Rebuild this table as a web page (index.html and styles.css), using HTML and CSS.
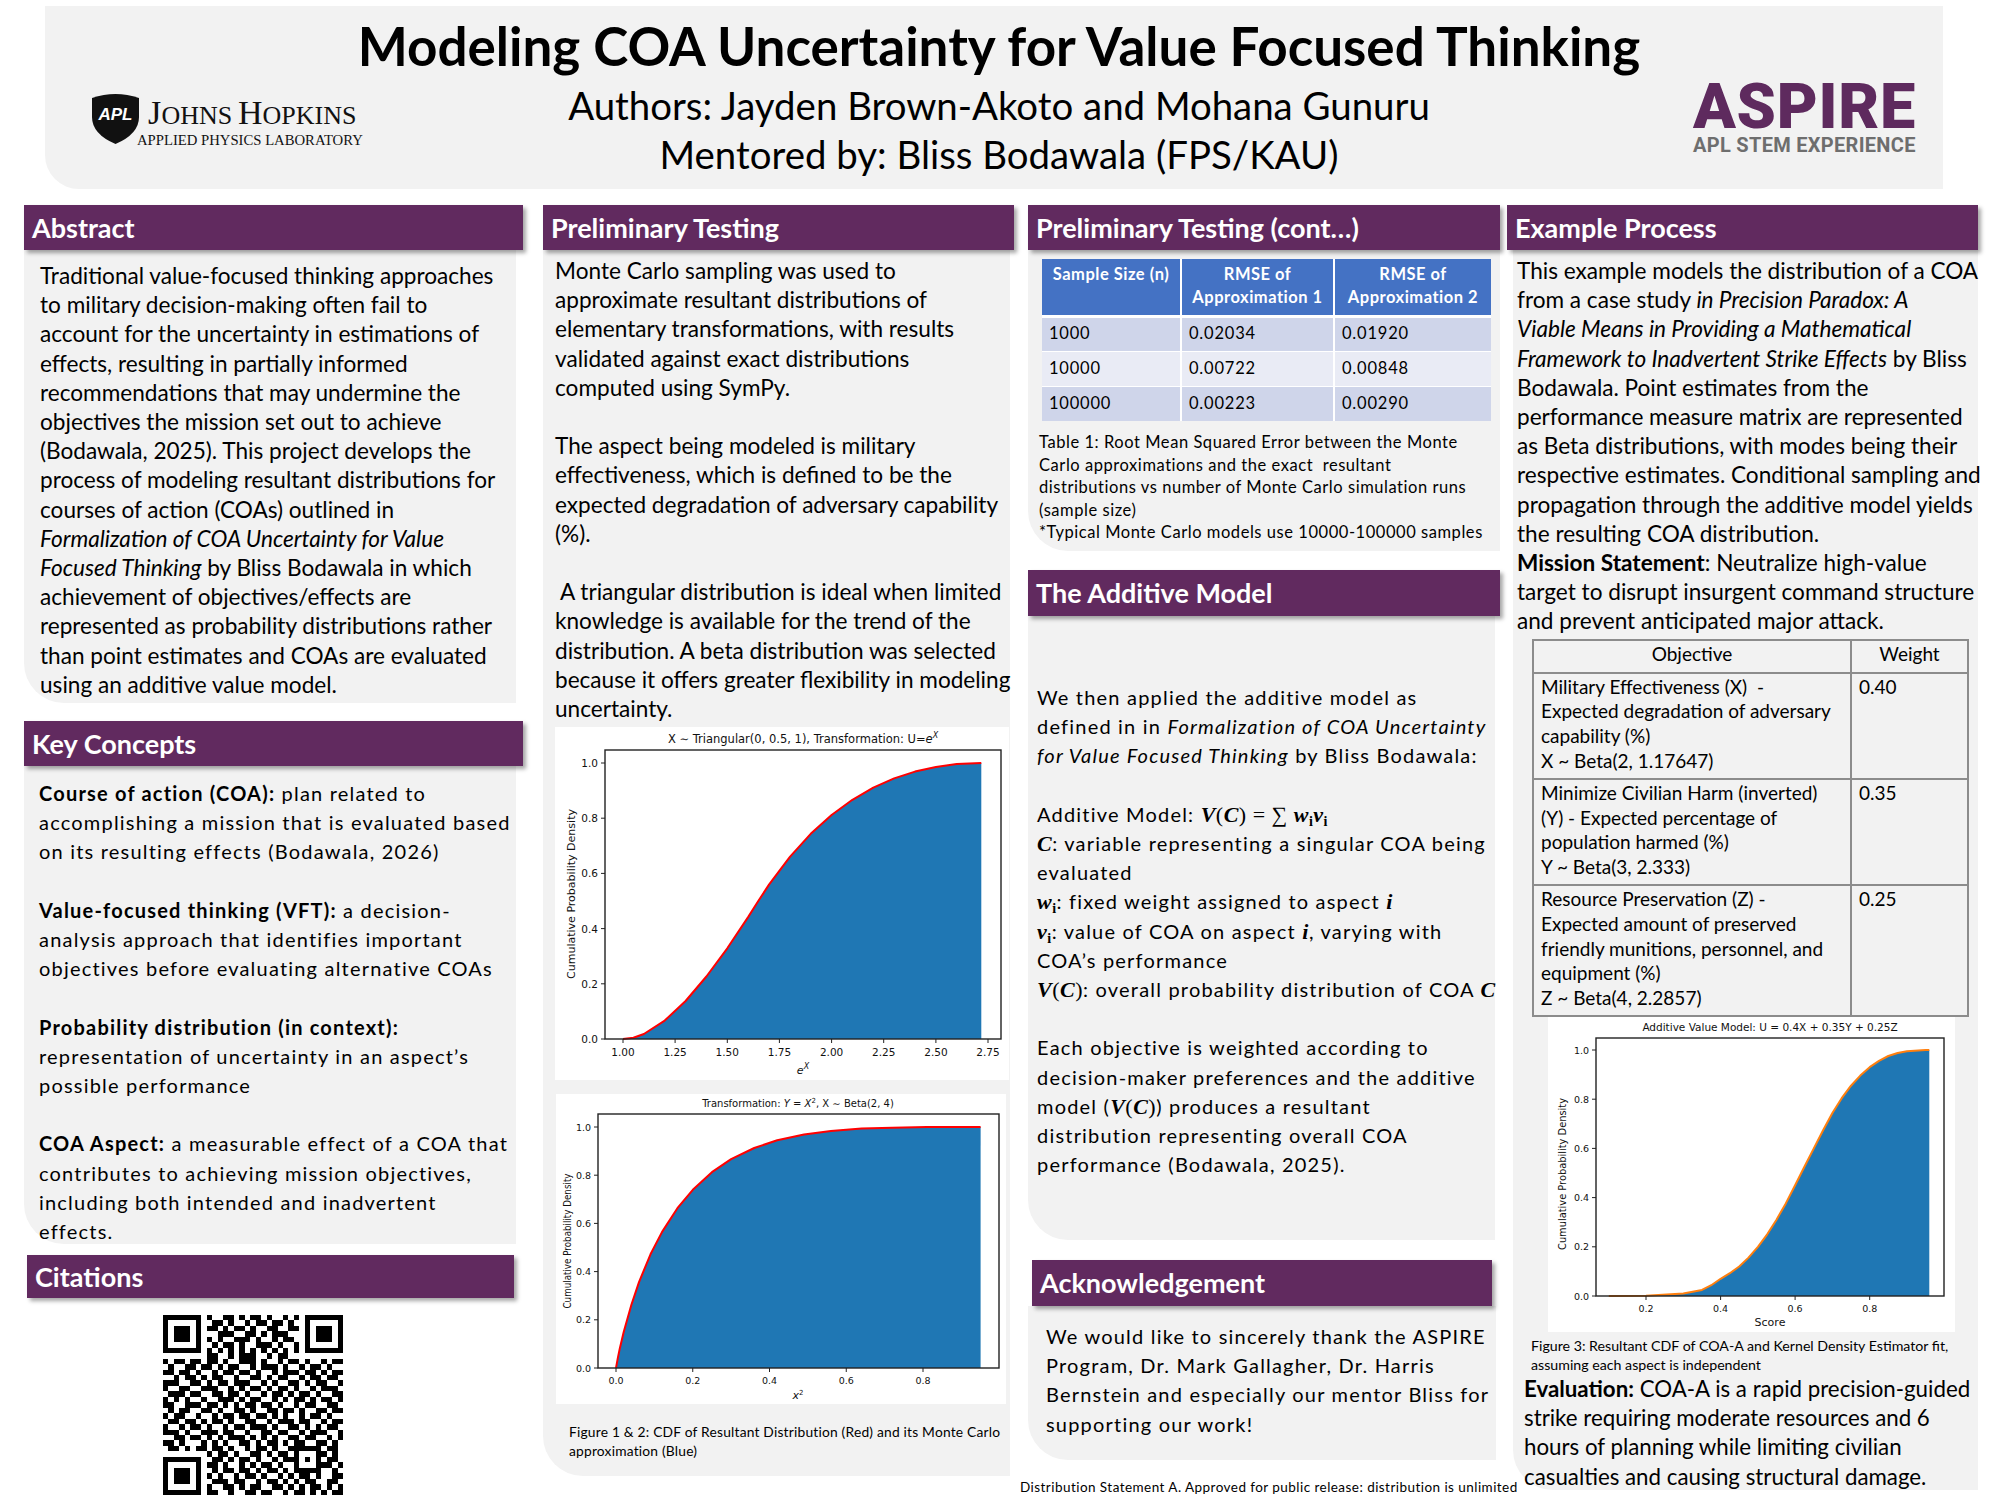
FILE: index.html
```html
<!DOCTYPE html>
<html lang="en">
<head>
<meta charset="utf-8">
<title>Modeling COA Uncertainty for Value Focused Thinking</title>
<link rel="stylesheet" href="styles.css">
</head>
<body>
<header class="banner">
  <div class="jhu">
    <svg width="290" height="64" viewBox="-12 -6 290 64">
      <path d="M2 8 Q25.5 0 49 8 L49 27 Q49 44 25.5 54 Q2 44 2 27 Z" fill="#111"/>
      <text x="25.5" y="30" class="apl-mark">APL</text>
      <text x="58" y="34" class="jh jh-big">J</text>
      <text x="71.5" y="34" class="jh">OHNS</text>
      <text x="148" y="34" class="jh jh-big">H</text>
      <text x="172.5" y="34" class="jh">OPKINS</text>
      <text x="47" y="55" class="apl-lab">APPLIED PHYSICS LABORATORY</text>
    </svg>
  </div>
  <div class="titles">
    <h1 class="title"><span>Modeling COA Uncertainty for Value Focused Thinking</span></h1>
    <p class="authors">Authors: Jayden Brown-Akoto and Mohana Gunuru</p>
    <p class="authors">Mentored by: Bliss Bodawala (FPS/KAU)</p>
  </div>
  <div class="aspire">
    <div class="aspire-word">ASPIRE</div>
    <div class="aspire-tag">APL STEM EXPERIENCE</div>
  </div>
</header>

<main class="columns">
  <!-- Column 1 -->
  <div class="col col1">
    <h2 class="bar">Abstract</h2>
    <div class="panel p-abstract txt">
      <p>Traditional value-focused thinking approaches<br>to military decision-making often fail to<br>account for the uncertainty in estimations of<br>effects, resulting in partially informed<br>recommendations that may undermine the<br>objectives the mission set out to achieve<br>(Bodawala, 2025). This project develops the<br>process of modeling resultant distributions for<br>courses of action (COAs) outlined in<br><i>Formalization of COA Uncertainty for Value<br>Focused Thinking</i> by Bliss Bodawala in which<br>achievement of objectives/effects are<br>represented as probability distributions rather<br>than point estimates and COAs are evaluated<br>using an additive value model.</p>
    </div>

    <h2 class="bar bar-key">Key Concepts</h2>
    <div class="panel p-key sp">
      <p><b>Course of action (COA):</b> plan related to<br>accomplishing a mission that is evaluated based<br>on its resulting effects (Bodawala, 2026)</p>
      <p class="gap"><b>Value-focused thinking (VFT):</b> a decision-<br>analysis approach that identifies important<br>objectives before evaluating alternative COAs</p>
      <p class="gap"><b>Probability distribution (in context):</b><br>representation of uncertainty in an aspect’s<br>possible performance</p>
      <p class="gap"><b>COA Aspect:</b> a measurable effect of a COA that<br>contributes to achieving mission objectives,<br>including both intended and inadvertent<br>effects.</p>
    </div>

    <h2 class="bar bar-cit">Citations</h2>
    <div class="qr">
      <svg width="180" height="180" viewBox="0 0 33 33" shape-rendering="crispEdges">
        <rect width="33" height="33" fill="#fff"/>
        <path stroke="#000" stroke-width="1" fill="none" d="M0 .5h7M8 .5h1M11 .5h2M14 .5h1M16 .5h2M19 .5h1M22 .5h1M24 .5h1M26 .5h7M0 1.5h1M6 1.5h1M9 1.5h2M12 1.5h1M15 1.5h1M17 1.5h2M20 1.5h2M23 1.5h1M26 1.5h1M32 1.5h1M0 2.5h1M2 2.5h3M6 2.5h1M8 2.5h2M11 2.5h1M13 2.5h2M16 2.5h1M19 2.5h2M23 2.5h2M26 2.5h1M28 2.5h3M32 2.5h1M0 3.5h1M2 3.5h3M6 3.5h1M10 3.5h3M15 3.5h2M18 3.5h1M20 3.5h3M26 3.5h1M28 3.5h3M32 3.5h1M0 4.5h1M2 4.5h3M6 4.5h1M8 4.5h1M10 4.5h1M13 4.5h3M17 4.5h1M20 4.5h1M22 4.5h2M26 4.5h1M28 4.5h3M32 4.5h1M0 5.5h1M6 5.5h1M9 5.5h1M11 5.5h2M14 5.5h1M17 5.5h3M21 5.5h1M24 5.5h1M26 5.5h1M32 5.5h1M0 6.5h7M8 6.5h1M10 6.5h1M12 6.5h1M14 6.5h1M16 6.5h1M18 6.5h1M20 6.5h1M22 6.5h1M24 6.5h1M26 6.5h7M8 7.5h2M12 7.5h1M14 7.5h3M19 7.5h1M21 7.5h2M0 8.5h1M2 8.5h2M5 8.5h2M8 8.5h2M11 8.5h1M14 8.5h3M18 8.5h1M21 8.5h1M23 8.5h2M26 8.5h1M29 8.5h1M31 8.5h2M1 9.5h1M4 9.5h2M7 9.5h2M10 9.5h1M12 9.5h2M16 9.5h1M18 9.5h3M22 9.5h1M25 9.5h1M27 9.5h2M30 9.5h1M0 10.5h2M3 10.5h2M6 10.5h1M9 10.5h1M11 10.5h2M14 10.5h2M17 10.5h1M20 10.5h1M22 10.5h3M26 10.5h2M29 10.5h1M31 10.5h2M2 11.5h1M4 11.5h2M7 11.5h1M9 11.5h2M13 11.5h1M16 11.5h2M19 11.5h1M21 11.5h2M25 11.5h1M27 11.5h2M30 11.5h2M0 12.5h3M5 12.5h2M8 12.5h1M10 12.5h2M13 12.5h3M18 12.5h1M20 12.5h1M23 12.5h2M26 12.5h1M28 12.5h2M32 12.5h1M0 13.5h1M3 13.5h2M7 13.5h3M12 13.5h1M14 13.5h1M16 13.5h2M19 13.5h1M21 13.5h2M24 13.5h1M27 13.5h1M29 13.5h3M1 14.5h3M5 14.5h2M9 14.5h2M12 14.5h2M15 14.5h1M18 14.5h1M20 14.5h2M23 14.5h1M25 14.5h2M28 14.5h1M31 14.5h2M0 15.5h1M2 15.5h1M4 15.5h1M7 15.5h1M10 15.5h3M14 15.5h1M16 15.5h2M20 15.5h1M22 15.5h1M24 15.5h2M27 15.5h1M29 15.5h2M32 15.5h1M0 16.5h2M4 16.5h3M8 16.5h2M11 16.5h1M13 16.5h1M15 16.5h2M18 16.5h2M21 16.5h1M24 16.5h1M26 16.5h2M30 16.5h2M1 17.5h1M3 17.5h2M7 17.5h2M10 17.5h1M13 17.5h2M16 17.5h1M19 17.5h2M22 17.5h2M25 17.5h1M28 17.5h2M31 17.5h2M0 18.5h1M2 18.5h2M6 18.5h1M9 18.5h1M11 18.5h2M14 18.5h2M17 18.5h2M20 18.5h1M22 18.5h1M25 18.5h1M27 18.5h2M30 18.5h1M1 19.5h2M4 19.5h2M7 19.5h1M9 19.5h2M12 19.5h1M15 19.5h2M19 19.5h1M21 19.5h3M25 19.5h2M29 19.5h1M31 19.5h2M0 20.5h1M3 20.5h1M5 20.5h2M8 20.5h1M11 20.5h1M13 20.5h2M16 20.5h3M20 20.5h1M23 20.5h2M26 20.5h1M28 20.5h1M30 20.5h2M0 21.5h3M4 21.5h1M7 21.5h3M11 21.5h2M15 21.5h1M18 21.5h2M21 21.5h2M25 21.5h1M27 21.5h3M32 21.5h1M2 22.5h2M5 22.5h2M8 22.5h1M10 22.5h1M12 22.5h3M16 22.5h1M18 22.5h1M20 22.5h1M23 22.5h2M26 22.5h2M30 22.5h1M32 22.5h1M0 23.5h2M3 23.5h1M7 23.5h1M9 23.5h1M11 23.5h1M14 23.5h2M17 23.5h1M19 23.5h2M22 23.5h1M24 23.5h2M28 23.5h2M31 23.5h1M1 24.5h2M4 24.5h1M6 24.5h2M9 24.5h2M12 24.5h1M15 24.5h1M17 24.5h2M20 24.5h1M23 24.5h6M30 24.5h2M8 25.5h1M10 25.5h2M13 25.5h1M16 25.5h2M19 25.5h1M21 25.5h2M24 25.5h1M28 25.5h2M31 25.5h1M0 26.5h7M9 26.5h2M12 26.5h1M14 26.5h2M17 26.5h1M20 26.5h1M22 26.5h3M26 26.5h1M28 26.5h1M30 26.5h2M0 27.5h1M6 27.5h1M8 27.5h2M11 27.5h1M14 27.5h1M16 27.5h1M18 27.5h2M21 27.5h1M24 27.5h1M28 27.5h3M32 27.5h1M0 28.5h1M2 28.5h3M6 28.5h1M9 28.5h1M11 28.5h2M14 28.5h2M17 28.5h1M19 28.5h2M22 28.5h1M24 28.5h5M31 28.5h1M0 29.5h1M2 29.5h3M6 29.5h1M8 29.5h1M10 29.5h1M13 29.5h1M15 29.5h2M18 29.5h1M21 29.5h1M23 29.5h1M25 29.5h2M28 29.5h1M31 29.5h2M0 30.5h1M2 30.5h3M6 30.5h1M9 30.5h3M13 30.5h2M17 30.5h1M19 30.5h2M22 30.5h1M24 30.5h1M26 30.5h2M30 30.5h2M0 31.5h1M6 31.5h1M8 31.5h1M11 31.5h2M14 31.5h1M16 31.5h2M20 31.5h2M23 31.5h1M25 31.5h1M27 31.5h2M30 31.5h1M32 31.5h1M0 32.5h7M8 32.5h2M12 32.5h1M15 32.5h2M18 32.5h2M22 32.5h1M24 32.5h2M27 32.5h1M29 32.5h1M31 32.5h2"/>
      </svg>
    </div>
  </div>

  <!-- Column 2 -->
  <div class="col col2">
    <h2 class="bar">Preliminary Testing</h2>
    <div class="panel p-prelim">
      <div class="txt">
        <p>Monte Carlo sampling was used to<br>approximate resultant distributions of<br>elementary transformations, with results<br>validated against exact distributions<br>computed using SymPy.</p>
        <p class="gap">The aspect being modeled is military<br>effectiveness, which is defined to be the<br>expected degradation of adversary capability<br>(%).</p>
        <p class="gap">&nbsp;A triangular distribution is ideal when limited<br>knowledge is available for the trend of the<br>distribution. A beta distribution was selected<br>because it offers greater flexibility in modeling<br>uncertainty.</p>
      </div>
      <div class="chart chart1">
        <svg width="454" height="353" viewBox="0 0 454 353">
          <rect width="454" height="353" fill="#fff"/>
          <text x="248" y="16" class="ct">X ∼ Triangular(0, 0.5, 1), Transformation: U=<tspan font-style="italic">e</tspan><tspan dy="-5" font-size="8" font-style="italic">X</tspan></text>
          <path class="fill" d="M68 312L78.4 310.7L88.9 307L109.7 293.6L130.6 274L151.4 249.5L172.3 221.3L193.1 190.1L203.3 174L214 157.6L234.9 129.8L255.7 106.8L276.6 88L297.4 72.8L318.3 60.7L339.1 51.4L360 44.6L380.9 39.9L401.7 37.1L426.3 36L426.3 312Z"/>
          <path class="red" d="M68 312L78.4 310.7L88.9 307L109.7 293.6L130.6 274L151.4 249.5L172.3 221.3L193.1 190.1L203.3 174L214 157.6L234.9 129.8L255.7 106.8L276.6 88L297.4 72.8L318.3 60.7L339.1 51.4L360 44.6L380.9 39.9L401.7 37.1L426.3 36"/>
          <rect x="50" y="23" width="396" height="289" class="frame"/>
          <path class="tk" d="M46 312h4M46 256.8h4M46 201.6h4M46 146.4h4M46 91.2h4M46 36h4M68 312v4M120.1 312v4M172.3 312v4M224.4 312v4M276.6 312v4M328.7 312v4M380.9 312v4M433 312v4"/>
          <g class="tl ty">
            <text x="43" y="316">0.0</text><text x="43" y="260.8">0.2</text><text x="43" y="205.6">0.4</text><text x="43" y="150.4">0.6</text><text x="43" y="95.2">0.8</text><text x="43" y="40">1.0</text>
          </g>
          <g class="tl tx">
            <text x="68" y="329">1.00</text><text x="120.1" y="329">1.25</text><text x="172.3" y="329">1.50</text><text x="224.4" y="329">1.75</text><text x="276.6" y="329">2.00</text><text x="328.7" y="329">2.25</text><text x="380.9" y="329">2.50</text><text x="433" y="329">2.75</text>
          </g>
          <text x="248" y="347" class="xl"><tspan font-style="italic">e</tspan><tspan dy="-5" font-size="8" font-style="italic">X</tspan></text>
          <text transform="translate(20 167) rotate(-90)" class="yl" textLength="170" lengthAdjust="spacingAndGlyphs">Cumulative Probability Density</text>
        </svg>
      </div>
      <div class="chart chart2">
        <svg width="450" height="310" viewBox="0 0 450 310">
          <rect width="450" height="310" fill="#fff"/>
          <text x="242" y="13" class="ct ct2">Transformation: <tspan font-style="italic">Y</tspan> = <tspan font-style="italic">X</tspan><tspan dy="-4" font-size="7">2</tspan><tspan dy="4">, X ∼ Beta(2, 4)</tspan></text>
          <path class="fill" d="M60 274L61.9 263.6L63.8 254.4L67.7 238.1L75.4 210.7L83 188.1L94.5 160.3L106.1 137.9L121.4 114.2L136.8 95.8L155.9 78.2L175.1 65.2L198.2 54L221.2 46.3L248 40.4L274.9 36.9L305.6 34.6L336.3 33.7L370.8 33.1L424.6 33L424.6 274Z"/>
          <path class="red" d="M60 274L61.9 263.6L63.8 254.4L67.7 238.1L75.4 210.7L83 188.1L94.5 160.3L106.1 137.9L121.4 114.2L136.8 95.8L155.9 78.2L175.1 65.2L198.2 54L221.2 46.3L248 40.4L274.9 36.9L305.6 34.6L336.3 33.7L370.8 33.1L424.6 33"/>
          <rect x="42" y="20" width="401" height="254" class="frame"/>
          <path class="tk" d="M38 274h4M38 225.8h4M38 177.6h4M38 129.4h4M38 81.2h4M38 33h4M60 274v4M136.75 274v4M213.5 274v4M290.25 274v4M367 274v4"/>
          <g class="tl ty sm">
            <text x="35" y="277.5">0.0</text><text x="35" y="229.3">0.2</text><text x="35" y="181.1">0.4</text><text x="35" y="132.9">0.6</text><text x="35" y="84.7">0.8</text><text x="35" y="36.5">1.0</text>
          </g>
          <g class="tl tx sm">
            <text x="60" y="290">0.0</text><text x="136.75" y="290">0.2</text><text x="213.5" y="290">0.4</text><text x="290.25" y="290">0.6</text><text x="367" y="290">0.8</text>
          </g>
          <text x="242" y="305" class="xl sm"><tspan font-style="italic">x</tspan><tspan dy="-4" font-size="7">2</tspan></text>
          <text transform="translate(15 147) rotate(-90)" class="yl" textLength="135" lengthAdjust="spacingAndGlyphs">Cumulative Probability Density</text>
        </svg>
      </div>
      <p class="fig-cap">Figure 1 &amp; 2: CDF of Resultant Distribution (Red) and its Monte Carlo<br>approximation (Blue)</p>
    </div>
  </div>

  <!-- Column 3 -->
  <div class="col col3">
    <h2 class="bar">Preliminary Testing (cont…)</h2>
    <div class="panel p-cont">
      <table class="rmse">
        <colgroup><col class="c1"><col class="c2"><col class="c3"></colgroup>
        <thead>
          <tr><th>Sample Size (n)</th><th>RMSE of<br>Approximation 1</th><th>RMSE of<br>Approximation 2</th></tr>
        </thead>
        <tbody>
          <tr class="dk"><td>1000</td><td>0.02034</td><td>0.01920</td></tr>
          <tr class="lt"><td>10000</td><td>0.00722</td><td>0.00848</td></tr>
          <tr class="dk"><td>100000</td><td>0.00223</td><td>0.00290</td></tr>
        </tbody>
      </table>
      <p class="tab-cap">Table 1: Root Mean Squared Error between the Monte<br>Carlo approximations and the exact &nbsp;resultant<br>distributions vs number of Monte Carlo simulation runs<br>(sample size)<br>*Typical Monte Carlo models use 10000-100000 samples</p>
    </div>

    <h2 class="bar bar-add">The Additive Model</h2>
    <div class="panel p-add sp">
      <p>We then applied the additive model as<br>defined in in <i>Formalization of COA Uncertainty<br>for Value Focused Thinking</i> by Bliss Bodawala:</p>
      <p class="gap">Additive Model: <span class="m"><b><i>V</i></b>(<b><i>C</i></b>) = ∑ <b><i>w</i><sub>i</sub><i>v</i><sub>i</sub></b></span><br>
      <span class="m"><b><i>C</i></b></span>: variable representing a singular COA being<br>evaluated<br>
      <span class="m"><b><i>w</i><sub>i</sub></b></span>: fixed weight assigned to aspect <span class="m"><b><i>i</i></b></span><br>
      <span class="m"><b><i>v</i><sub>i</sub></b></span>: value of COA on aspect <span class="m"><b><i>i</i></b></span>, varying with<br>COA’s performance<br>
      <span class="m"><b><i>V</i></b>(<b><i>C</i></b>)</span>: overall probability distribution of COA <span class="m"><b><i>C</i></b></span></p>
      <p class="gap">Each objective is weighted according to<br>decision-maker preferences and the additive<br>model (<span class="m"><b><i>V</i></b>(<b><i>C</i></b>)</span>) produces a resultant<br>distribution representing overall COA<br>performance (Bodawala, 2025).</p>
    </div>

    <h2 class="bar bar-ack">Acknowledgement</h2>
    <div class="panel p-ack sp">
      <p>We would like to sincerely thank the ASPIRE<br>Program, Dr. Mark Gallagher, Dr. Harris<br>Bernstein and especially our mentor Bliss for<br>supporting our work!</p>
    </div>
    <p class="dist">Distribution Statement A. Approved for public release: distribution is unlimited</p>
  </div>

  <!-- Column 4 -->
  <div class="col col4">
    <h2 class="bar">Example Process</h2>
    <div class="panel p-ex">
      <div class="txt">
        <p>This example models the distribution of a COA<br>from a case study <i>in Precision Paradox: A<br>Viable Means in Providing a Mathematical<br>Framework to Inadvertent Strike Effects</i> by Bliss<br>Bodawala. Point estimates from the<br>performance measure matrix are represented<br>as Beta distributions, with modes being their<br>respective estimates. Conditional sampling and<br>propagation through the additive model yields<br>the resulting COA distribution.<br><b>Mission Statement</b>: Neutralize high-value<br>target to disrupt insurgent command structure<br>and prevent anticipated major attack.</p>
      </div>
      <table class="obj">
        <colgroup><col class="o1"><col class="o2"></colgroup>
        <thead><tr><th>Objective</th><th>Weight</th></tr></thead>
        <tbody>
          <tr><td>Military Effectiveness (X) &nbsp;-<br>Expected degradation of adversary<br>capability (%)<br>X ~ Beta(2, 1.17647)</td><td>0.40</td></tr>
          <tr><td>Minimize Civilian Harm (inverted)<br>(Y) - Expected percentage of<br>population harmed (%)<br>Y ~ Beta(3, 2.333)</td><td>0.35</td></tr>
          <tr><td>Resource Preservation (Z) -<br>Expected amount of preserved<br>friendly munitions, personnel, and<br>equipment (%)<br>Z ~ Beta(4, 2.2857)</td><td>0.25</td></tr>
        </tbody>
      </table>
      <div class="chart chart3">
        <svg width="407" height="315" viewBox="0 0 407 315">
          <rect width="407" height="315" fill="#fff"/>
          <text x="222" y="14" class="ct ct3">Additive Value Model: U = 0.4X + 0.35Y + 0.25Z</text>
          <path class="fill" d="M60.8 279L98 278.8L135.3 276.5L154 272.9L163.3 268.2L172.6 261.8L181.9 256.2L191.2 249.5L200.5 240.6L209.9 229.8L219.2 217.3L228.5 202.7L237.8 186.4L247.1 168.3L256.4 149.8L265.8 131.4L275.1 113.2L284.4 96L293.7 81.2L303 68.7L312.3 58.6L321.7 50.2L331 43.9L340.3 39L349.6 36L358.9 34.2L377.6 33L381.3 33L381.3 279Z"/>
          <path class="orange" d="M60.8 279L98 278.8L135.3 276.5L154 272.9L163.3 268.2L172.6 261.8L181.9 256.2L191.2 249.5L200.5 240.6L209.9 229.8L219.2 217.3L228.5 202.7L237.8 186.4L247.1 168.3L256.4 149.8L265.8 131.4L275.1 113.2L284.4 96L293.7 81.2L303 68.7L312.3 58.6L321.7 50.2L331 43.9L340.3 39L349.6 36L358.9 34.2L377.6 33L381.3 33"/>
          <rect x="48" y="21" width="348" height="258" class="frame"/>
          <path class="tk" d="M44 279h4M44 229.8h4M44 180.6h4M44 131.4h4M44 82.2h4M44 33h4M98 279v4M172.6 279v4M247.1 279v4M321.7 279v4"/>
          <g class="tl ty sm">
            <text x="41" y="282.5">0.0</text><text x="41" y="233.3">0.2</text><text x="41" y="184.1">0.4</text><text x="41" y="134.9">0.6</text><text x="41" y="85.7">0.8</text><text x="41" y="36.5">1.0</text>
          </g>
          <g class="tl tx sm">
            <text x="98" y="295">0.2</text><text x="172.6" y="295">0.4</text><text x="247.1" y="295">0.6</text><text x="321.7" y="295">0.8</text>
          </g>
          <text x="222" y="309" class="xl sm">Score</text>
          <text transform="translate(18 157) rotate(-90)" class="yl yl3" textLength="152" lengthAdjust="spacingAndGlyphs">Cumulative Probability Density</text>
        </svg>
      </div>
      <p class="fig3-cap">Figure 3: Resultant CDF of COA-A and Kernel Density Estimator fit,<br>assuming each aspect is independent</p>
      <p class="eval"><b>Evaluation:</b> COA-A is a rapid precision-guided<br>strike requiring moderate resources and 6<br>hours of planning while limiting civilian<br>casualties and causing structural damage.</p>
    </div>
  </div>
</main>
</body>
</html>
```

FILE: styles.css
```css
* { box-sizing: border-box; }

html, body {
  margin: 0;
  padding: 0;
}

body {
  width: 2000px;
  height: 1500px;
  overflow: hidden;
  background: #ffffff;
  color: #000;
  font-family: Lato, "Open Sans", "Liberation Sans", sans-serif;
}

p { margin: 0; }
h1, h2 { margin: 0; }

/* ---------- Banner ---------- */
.banner {
  margin: 6px 57px 0 45px;
  height: 183px;
  background: #f2f2f2;
  border-bottom-left-radius: 34px;
  display: grid;
  grid-template-columns: 323px minmax(0, 1fr) 313px;
}

.jhu {
  margin: 78px 0 0 33px;
}
.jhu svg { display: block; }

.apl-mark {
  font-family: "Liberation Sans", Arial, sans-serif;
  font-size: 17px;
  font-style: italic;
  font-weight: 700;
  fill: #fff;
  text-anchor: middle;
}

.jh {
  font-family: "Liberation Serif", "Times New Roman", serif;
  font-size: 26px;
  fill: #111;
}

.jh-big { font-size: 34px; }

.apl-lab {
  font-family: "Liberation Serif", "Times New Roman", serif;
  font-size: 14.7px;
  fill: #111;
}

.titles {
  text-align: center;
  padding-top: 10px;
  min-width: 0;
}

.title {
  display: flex;
  justify-content: center;
  font-size: 53px;
  font-weight: 700;
  line-height: 60px;
  white-space: nowrap;
}

.authors {
  font-size: 38.4px;
  line-height: 49px;
  white-space: nowrap;
}

.title + .authors { margin-top: 5px; }

.aspire {
  justify-self: end;
  margin: 78px 30px 0 0;
  width: 220px;
  font-family: Roboto, "Liberation Sans", sans-serif;
  white-space: nowrap;
}

.aspire-word {
  font-size: 63px;
  font-weight: 900;
  line-height: 46px;
  letter-spacing: 0.7px;
  color: #5e2a5e;
}

.aspire-tag {
  margin-top: 7px;
  font-size: 20px;
  font-weight: 700;
  line-height: 16px;
  letter-spacing: 0.3px;
  color: #6e6e6e;
}

/* ---------- Columns ---------- */
.columns {
  display: flex;
  align-items: flex-start;
  padding-left: 24px;
  margin-top: 16px;
}

.col1 { width: 499px; margin-right: 20px; }
.col2 { width: 471px; margin-right: 14px; }
.col3 { width: 472px; margin-right: 7px; }
.col4 { width: 471px; }

.bar {
  height: 45px;
  line-height: 45px;
  background: #612a5f;
  color: #fff;
  font-size: 27px;
  font-weight: 700;
  padding-left: 8px;
  white-space: nowrap;
  box-shadow: 3px 3px 4px rgba(0, 0, 0, 0.35);
  position: relative;
  z-index: 1;
}

.panel {
  background: #f2f2f2;
  border-bottom-left-radius: 40px;
}

.txt {
  font-size: 22.6px;
  line-height: 29.2px;
  white-space: nowrap;
}

.sp {
  font-size: 20px;
  letter-spacing: 1.2px;
  line-height: 29.2px;
  white-space: nowrap;
}

.gap { margin-top: 29.2px; }

/* Column 1 */
.p-abstract {
  width: 492px;
  height: 453px;
  padding: 11px 0 0 16px;
}

.bar-key { margin-top: 18px; }

.p-key {
  width: 492px;
  height: 478px;
  padding: 13px 0 0 15px;
}

.bar-cit {
  margin: 11px 0 0 3px;
  width: 487px;
  height: 43px;
  line-height: 43px;
}

.qr {
  margin: 17px 0 0 139px;
  width: 180px;
  height: 180px;
}
.qr svg { display: block; }

/* Column 2 */
.p-prelim {
  width: 467px;
  height: 1226px;
  padding: 6px 0 0 12px;
}

.chart svg { display: block; }
.chart1 { margin-top: 4px; }
.chart2 { margin: 14px 0 0 1px; }

.fill { fill: #1f77b4; }
.red { fill: none; stroke: #ff0000; stroke-width: 2; stroke-linejoin: round; }
.orange { fill: none; stroke: #ff7f0e; stroke-width: 2; stroke-linejoin: round; }
.frame { fill: none; stroke: #222; stroke-width: 1.4; }
.tk { stroke: #222; stroke-width: 1; }

.ct {
  font-family: "DejaVu Sans", sans-serif;
  font-size: 11.5px;
  text-anchor: middle;
  fill: #111;
}
.ct2 { font-size: 10px; }
.ct3 { font-size: 10.5px; }

.tl text {
  font-family: "DejaVu Sans", sans-serif;
  font-size: 10.5px;
  fill: #111;
}
.tl.sm text { font-size: 9.5px; }
.ty text { text-anchor: end; }
.tx text { text-anchor: middle; }

.xl {
  font-family: "DejaVu Sans", sans-serif;
  font-size: 11px;
  text-anchor: middle;
  fill: #111;
}

.yl {
  font-family: "DejaVu Sans", sans-serif;
  font-size: 11px;
  text-anchor: middle;
  fill: #111;
}

.fig-cap {
  margin: 18px 0 0 14px;
  font-size: 13.8px;
  letter-spacing: 0.2px;
  line-height: 19px;
  white-space: nowrap;
}

/* Column 3 */
.p-cont {
  width: 472px;
  height: 301px;
  padding: 9px 0 0 11px;
}

.rmse {
  margin-left: 3px;
  width: 449px;
  border-collapse: collapse;
  table-layout: fixed;
  font-size: 16.5px;
  letter-spacing: 0.8px;
}
.rmse .c1 { width: 139px; }
.rmse .c2 { width: 153px; }
.rmse .c3 { width: 157px; }

.rmse th {
  background: #4472c4;
  color: #fff;
  font-weight: 700;
  font-size: 16.5px;
  letter-spacing: 0.5px;
  height: 57px;
  vertical-align: top;
  padding: 4px 2px 0;
  line-height: 23px;
  text-align: center;
  border-left: 2px solid #fff;
  border-bottom: 3px solid #fff;
  white-space: nowrap;
}

.rmse td {
  height: 35px;
  padding: 0 7px 2px;
  vertical-align: middle;
  text-align: left;
  border-left: 2px solid #fff;
  border-top: 1px solid #fff;
}

.rmse th:first-child, .rmse td:first-child { border-left: none; }
.rmse tr.dk td { background: #cfd5ea; }
.rmse tr.lt td { background: #e9ebf5; }

.tab-cap {
  margin-top: 10px;
  font-size: 16.5px;
  letter-spacing: 0.55px;
  line-height: 22.6px;
  white-space: nowrap;
}

.bar-add { margin-top: 19px; height: 46px; line-height: 46px; }

.p-add {
  width: 467px;
  height: 624px;
  padding: 67px 0 0 9px;
}

.m {
  font-family: "Liberation Serif", "DejaVu Serif", serif;
  font-size: 22px;
  letter-spacing: 0.5px;
}
.m sub { font-size: 14px; vertical-align: -4px; line-height: 0; }

.bar-ack {
  margin: 20px 0 0 4px;
  width: 460px;
  height: 46px;
  line-height: 46px;
}

.p-ack {
  width: 468px;
  height: 154px;
  padding: 16px 0 0 18px;
}

.dist {
  margin: 18px 0 0 -8px;
  font-size: 13.5px;
  letter-spacing: 0.45px;
  line-height: 18px;
  white-space: nowrap;
  position: relative;
  z-index: 2;
}

/* Column 4 */
.p-ex {
  margin-left: 6px;
  width: 465px;
  height: 1240px;
  padding: 6px 0 0 4px;
}

.obj {
  margin: 3px 0 0 15px;
  width: 435px;
  border-collapse: collapse;
  table-layout: fixed;
  font-size: 19px;
  line-height: 24.8px;
}
.obj .o1 { width: 318px; }
.obj .o2 { width: 117px; }

.obj th, .obj td {
  border: 2px solid #8c8c8c;
  padding: 1px 7px 4px;
  vertical-align: top;
  text-align: left;
  font-weight: 400;
  white-space: nowrap;
}
.obj th { text-align: center; height: 33px; }

.chart3 { margin-left: 31px; }

.fig3-cap {
  margin: 4px 0 0 14px;
  font-size: 14.2px;
  line-height: 19px;
  white-space: nowrap;
}

.eval {
  margin-left: 7px;
  font-size: 22.3px;
  line-height: 29.2px;
  white-space: nowrap;
}
```
